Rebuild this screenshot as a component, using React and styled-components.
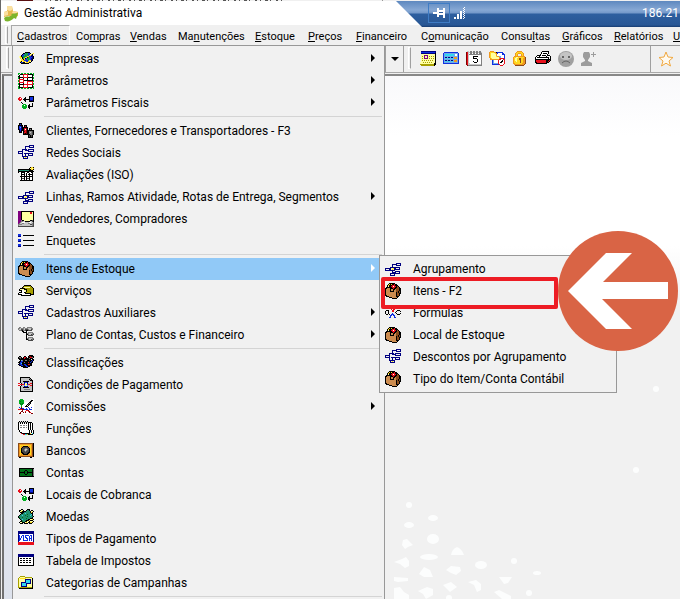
import React from "react";
import styled, { createGlobalStyle } from "styled-components";

const GlobalStyle = createGlobalStyle`
  * {
    box-sizing: border-box;
  }
  body {
    margin: 0;
    background: #f1f1f1;
    overflow: hidden;
  }
  button {
    border: 0;
    padding: 0;
    background: transparent;
    font: inherit;
    color: inherit;
    text-align: left;
  }
`;

const COLORS = {
  k: "#000000",
  n: "#000080",
  b: "#1030e0",
  r: "#e8101c",
  m: "#800000",
  g: "#00b020",
  G: "#007018",
  y: "#ffffa0",
  Y: "#ffd820",
  v: "#a8a000",
  w: "#ffffff",
  s: "#c4c4c4",
  d: "#808080",
  D: "#484848",
  c: "#30d8f0",
  t: "#209070",
  l: "#70a8e8",
  o: "#cc8c50",
  e: "#8a4c1c",
  O: "#f09820",
  p: "#800080",
};

const ICONS = {
  globe: [
    "................",
    ".......kkkkk....",
    ".....kktgtbbk.yY",
    "....kbtttgbbyYk.",
    "...kbbtgttbYYnk.",
    ".yYkbgggtYYbbnnk",
    ".yYYkgtYYkgtbbnk",
    "..YyktYkbggtbnnk",
    "...YYkYbbtgtbnk.",
    "..yYYYbbbbtYYnk.",
    ".yYkyYYYbbYYyk..",
    "..kbbkkyYYYkk...",
    "...kkkkkkkk.....",
  ],
  grid: [
    "gg.gg.gg.gg.gg.g",
    "g.kkkrrrrrkkkkkg",
    ".kwwwrwwwrwwwwkg",
    "kkwwwrwwwrwwwwk.",
    "gkkkkrrrrrkkkkkg",
    "gkwwwkwwwkwwwwkg",
    ".rrrrrwwwkwwwwk.",
    "grwwwrkkkkkkkkkg",
    "grwwwrwwwrrrrrrg",
    ".rrrrrwwwrwwwwr.",
    "gkwwwkwwwrwwwwrg",
    "gkkkkkrrrrrrrrrg",
    ".kwwwrwwwrwwwwk.",
    "gkwwwrwwwrwwwwkg",
    "gkkkkrrrrrkkkkkg",
    "gg.gg.gg.gg.gg.g",
  ],
  flow: [
    "................",
    "...........kkkkk",
    ".rr....k...kbbbk",
    "rrwr..kk...kbbbk",
    "rrrr.kkkkkkkbbbk",
    ".rr...kk...knnnk",
    ".......k...kkkkk",
    "...k............",
    "....k.........k.",
    ".....ggg...k..k.",
    "....ggwgg.kk..k.",
    "....ggggg.kkkkk.",
    "....ggggg.kk....",
    ".....ggg...k....",
  ],
  people: [
    ".kkk............",
    ".kbk............",
    "kkkkk.kkk.......",
    "kbbnk.krk.......",
    "kblnkkkkkk......",
    "kbbnkkrrmk.kkk..",
    "knbnkkrwmk.kdk..",
    ".kbkkkrrmkkkkkkk",
    ".knk.kmrmkkdddDk",
    ".kkk.krrmkkdsdDk",
    ".....kmkmkkdddDk",
    ".....kkkkkkkddDk",
    "..........kDkDk.",
    "..........kDkDk.",
    "..........kkkkk.",
  ],
  network: [
    "...........nnnnn",
    ".......nnnnn...n",
    ".......n...nnnnn",
    ".......n........",
    "....nnnnn.nnnnnn",
    "....n..nnnn....n",
    "nnnnn.....nnnnnn",
    "n...n...........",
    "nnnnn.nnnnnnnnn.",
    "....n..n..n...n.",
    "....n..n..nnnnn.",
    "....nnnnnn......",
    ".....nyYyn......",
    ".....nnnnn......",
  ],
  branch: [
    "................",
    "................",
    "...........nnnnn",
    ".......nnnnn...n",
    ".......n...nnnnn",
    ".......n........",
    ".....nnnnnnnnnn.",
    "nnnnnnyyYnn...n.",
    "n...nnyYynnnnnn.",
    "nnnnnnnnnn......",
    ".......n..nnnnn.",
    ".......nnnn...n.",
    ".....nnnnnnnnnn.",
    ".....n...n......",
    ".....nnnnn......",
  ],
  review: [
    "............kYYk",
    "...........kyYyY",
    "kkkkkkkkkkkkkYYk",
    "kttttttttttkkkk.",
    "kkkkkkkkkkkkkkkk",
    "k.wkkkkwwkkwwkk.",
    "..wkwwkwkwwkwwk.",
    "..wkkkkwkwkkkkk.",
    "..wkwwkwkwwkwwk.",
    "..kkkkkkkkkkkkk.",
    "..wkwwkwkwwkwwk.",
    "..wkDDkwkDDkwwk.",
    "..wkwwkwkwwkwwk.",
    "..kkkkkkkkkkkkk.",
  ],
  vendor: [
    "pppkkkkkkkkkkkkk",
    "pppkyyyyyyyyrryk",
    "pppkyyyyyyyyrryk",
    "pppkyyyyyyyyyyyk",
    "pppkyyyyyyyyyyyk",
    "pppkyyyyyyyyyyyk",
    "pppkyyyyyyyyyyyk",
    "pppkyyyyyyyyyyyk",
    "pppkyyyyyyyyyyyk",
    "pppdkkyyyyyykkDk",
    "pppddsskkkkkssDk",
    "ppdswwwsssswwssD",
    "pdssddssssddssdD",
    "ddddssssssssDDdD",
    "dsssssssssssssdD",
    "DDDDDDDDDDDDDDDD",
  ],
  list: [
    "................",
    "bbb.............",
    "bbb..kkkkkkkkkkk",
    "nnn.............",
    "................",
    "................",
    "bbb.............",
    "bbb..kkkkkkkkkkk",
    "nnn.............",
    "................",
    "................",
    "bbb.............",
    "bbb..kkkkkkkkkkk",
    "nnn.............",
  ],
  box: [
    "....kkkkkk......",
    "...kYkYkkrkk....",
    "..kYkkkrrrkkk...",
    "..kykkrrwrrkek..",
    ".kkkkkkrrrkkeek.",
    "kkoookkkrkkeeekk",
    "kooookookkoeeekk",
    "kooookookooeeekk",
    "kooookkkkooeekek",
    "kooooooooookekek",
    "kooooooooookeekk",
    "kooooooooookeek.",
    "kkoooooooookeek.",
    ".kkkoooooookkk..",
    "....kkkoooook...",
    ".......kkkkk....",
  ],
  service: [
    "................",
    "................",
    "......kkkkkkk...",
    ".....kvvvvvvvk..",
    "....kvyyyyyyvvk.",
    "..kkkkkvvvvvvvvk",
    ".kyyyykkkvvvvvvk",
    ".kkkwwyykvvvvvvk",
    "...kwwwykvvvvvvk",
    ".kkkwwkkvvvvvvvk",
    "kwwwwwwkkkkkkvvk",
    "kkkkwwwwwwwwkkkk",
    "...kkkkkkkkkk...",
  ],
  plan: [
    ".dd..dd..ddddd..",
    "ddsdddsdddsssdd.",
    "dssDDdsDDDdssDd.",
    ".ddDkddDkkDDDD..",
    "....kk..k.......",
    ".....kkkk.ddddd.",
    "........kddsssdd",
    "........kkdssDdD",
    "........k.DDDDD.",
    "........k.......",
    "........k.ddddd.",
    "........kddsssdd",
    "........kkdssDdD",
    "..........DDDDD.",
  ],
  classes: [
    "...........kkkk.",
    ".kk...kk..kmmkkk",
    "kddk.krrk.kkrrdk",
    "kkDkkkrkkkkdkkk.",
    ".kkkkkkkkkkkk.kk",
    "..kldkkddkkDkkbk",
    ".kkbbkkkkkkkkbk.",
    "kkbbkkdkkkrkbkk.",
    ".kbckkkkkkkkkk..",
    "knbbkkbbkkrrkk..",
    ".kkbbkkbbkkkkk..",
    "...kkkkkbbkk....",
    ".....kkkkk......",
  ],
  payment: [
    "..kkkkkkkkkk....",
    "..kssssssssdk...",
    "..ksssssssskdk..",
    "..kssssssssskkk.",
    "..ksskkkkkksssk.",
    "..ksssnbbnssssk.",
    "rr.kssnyynssrrk.",
    "..rrrrbyYbrrssk.",
    "rr.ksslyylssrrk.",
    "..ksssnbbnssssk.",
    "..ksskkkkkksssk.",
    "..ksssssssssssk.",
    "..ksssddddddssk.",
    "..ksssssssssssk.",
    "..kkkkkkkkkkkkk.",
  ],
  commission: [
    "..ggg.........ww",
    ".ggggg.......kkw",
    ".gGggg......kkww",
    ".ggggg.wwwwkkwww",
    ".gGgGgwwwwkdkwww",
    "..gGgwwwwkdkwwww",
    "...gwwwwkykwwwww",
    "...gwwwkkkwwwwww",
    ".b.mwwwwwwbwwbww",
    "..bmbbwwbwwbwwww",
    "rrrrmmbbbbwbbbww",
    "..wwmwwwrrmwwwww",
    "wwwmmwwrwwrmwwww",
    "wwmwwmwmwwwmrwww",
    "wmmwwwwwwwwwwmmw",
  ],
  notepad: [
    ".k.k.k.k.k......",
    "kskskskskskkkk..",
    "kwkwkwkwkwkwkwk.",
    "kwwwwwwwwwkwkwk.",
    "kwddwddwdwkwkwk.",
    "kwwwwwwwwwkwkwk.",
    "kwddwddwdwkwkwk.",
    "kwwwwwwwwwkwkwk.",
    "kwwwwwwwwwkwkwk.",
    ".kwwwwwwwwwkwkwk",
    ".kwwwwwwwwwkwkwk",
    "..kkwwwwwwwkwkwk",
    "...rkkkkkkkkYwck",
    ".....rrccYkkkkk.",
  ],
  safe: [
    "eeeeeeeeeeeeeeek",
    "eOOOOOOOOOOOOOek",
    "eOYYYYYYYYYYYOek",
    "eOYOOkkkkkOOYOek",
    "eOYOkDDDDDkOYOek",
    "eOYkDDDddDDkYOek",
    "eOYkDDdssdDkYOek",
    "eOYkDDdsdDDkYOek",
    "eOYkDDDdDDDkYOek",
    "eOYkkDDDDDkkYOek",
    "eOYOkkDDDkkOYOek",
    "eOYOOkkkkkOOYOek",
    "eOOOOOOOOOOOOOek",
    "eeeeeeeeeeeeeeek",
    ".kk.........kk..",
  ],
  cash: [
    "................",
    "................",
    "................",
    ".kkkkkkkkkkkkkkk",
    ".kGGGGGGGGGGGGkd",
    ".kGGGGGkkGGGGGkd",
    ".kGGGGkGGkGGGGkd",
    ".kkkkkkGGkkkkkkd",
    ".kGGGGkGGkGGGGkd",
    ".kGGGGGkkGGGGGkd",
    ".kGGGGGGGGGGGGkd",
    ".kkkkkkkkkkkkkkk",
  ],
  coins: [
    "...kk....kkk....",
    ".kkyyk..kttk.kk.",
    ".kyYkkkkttttkyyk",
    "..kkkkttttttkYk.",
    "...kkttctttttkk.",
    "..kttttttGtttck.",
    ".kttcttGttttctk.",
    "kttttttttGtttttk",
    "kGttGtttttttttk.",
    ".kttttttGtttkkk.",
    "..ktctttttkkyyYk",
    "...kttttkkkYkkk.",
    "..kkGttkkyykyyyk",
    ".kyykkkyYykkYYk.",
    "..kkk.kkkk.kkk..",
  ],
  visa: [
    "nnnnnnnnnnnnnnnn",
    "nnnnnnnnnnnnnnnn",
    "nnnnnnnnnnnnnnnn",
    "nwwwwwwwwwwwwwwn",
    "nbwwbbwbbbbwbbwn",
    "nbwbwbwbwwwbwbwn",
    "nbwbwbwbbwwbwbwn",
    "nbbwwbwwbbwbbbwn",
    "nbbwwbwwwbwbwbwn",
    "nbwwwbbbbbwbwbwn",
    "nwwwwwwwwwwwwwwn",
    "rrrrrrrrrrrrrrrr",
    "rrrrrrrrrrrrrrrr",
    "rrrrrrrrrrrrrrrr",
  ],
  table: [
    "................",
    "nnnnnnnnnnnnnnnn",
    "nnnnnnnnnnnnnnnn",
    "nnnnnnnnnnnnnnnn",
    "kwwwwwwwwwwwwwwk",
    "kwkkwkkwkkwkkwwk",
    "kwwwwwwwwwwwwwwk",
    "kwkkwkkwkkwkkwwk",
    "kwwwwwwwwwwwwwwk",
    "kwkkwkkwkkwkkwwk",
    "kwwwwwwwwwwwwwwk",
    "kwwwwwwwwwwwwwwk",
    "kkkkkkkkkkkkkkkk",
  ],
  folder: [
    "................",
    "..vvvvv.........",
    ".vyyyyyvvvvvvv..",
    "vyYYYYYYyyyyyyk.",
    "vyyyyyynnnnnnyk.",
    "vyyyyyynccccnyk.",
    "vyyyyyynccccnyk.",
    "vyynnnnnccccnyk.",
    "vyynccccnnnnnyk.",
    "vyynccccnyyyyyk.",
    "vyynccccnyyyyyk.",
    "vyynnnnnnyyyyyk.",
    "vvvvvvvvvvvvvvk.",
    ".kkkkkkkkkkkkkk.",
  ],
  formula: [
    "................",
    "....rr....rr....",
    ".....rr..rr.....",
    "......r..r......",
    "......r.rr......",
    ".kkk...rr...kkk.",
    "k..k...rr..k...k",
    "k..k......k.....",
    "k..k...b...k...k",
    ".kk.k.bbb...kkk.",
    ".....bb.bb......",
    ".....b...b......",
    "....bb...bb.....",
    "................",
  ],
  calendar: [
    ".nnnnnnnnnnnnnnn",
    ".bbbbbbbbbbbbbbn",
    ".nnnnnnnnnnnnnnk",
    ".yyyyyyyyyyyyyyk",
    ".yyyppppyyyyyyyk",
    ".yvypyypyvyvyvyk",
    ".yyypyypyyyyyyyk",
    ".yvyppppyvyvyvyk",
    ".yyyyyyyyyyyyyyk",
    ".yvyvyvyvyvyvyyk",
    ".yyyyyyyyyyyyyyk",
    "yyyvyvyvyvyvyyyk",
    "yyyyyyyyyyyyyykk",
    "vvvvvvvvvvvvvvkk",
    ".vvvvvvvvvvvvvk.",
  ],
  calc: [
    "................",
    ".bbbbbbbbbbbbbb.",
    "bllllllllllllllb",
    "blccccccccclwwlb",
    "blccccccccclwwlb",
    "bllllllllllllllb",
    "blnnlnnlnnlOOOlb",
    "blcclcclcclOOOlb",
    "bllllllllllllllb",
    "blnnlnnlnnlOOOlb",
    "blcclcclcclOOOlb",
    "bllllllllllllllb",
    "bbbbbbbbbbbbbbbb",
  ],
  agenda: [
    ".ss.dd.dd.dd.dd.",
    "mrssddsddsddsdds",
    "mrswddwddwddwddd",
    "mrsddddddddddddd",
    "mrswwwwwwwwwwwwd",
    "mrswwwwkkkkkwwwd",
    "mrswwwwkwwwwwwwd",
    "mrswwwwkkkkwwwwd",
    "mrswwwwwwwwkwwwd",
    "mrswwwwwwwwkwwwd",
    "mrswwwwkwwwkwwwd",
    "mrswwwwwkkkwwwwd",
    "mrsswwwwwwwwwwwd",
    "mrsssssssssssssd",
    ".mdddddddddddddd",
  ],
  files: [
    ".OOOO...........",
    "OYYYYOOkbbbbbb..",
    "OYyyyyYObwwwwbb.",
    "OYyyyyyOwwwwwbbb",
    "OYyyyyyOwwwwwwwb",
    "OYyyyyyYOOllwwwb",
    "OYyyyyyyyyOlwwwb",
    ".OYyyyyyyyOrrrrb",
    ".OOOOOOOOOrrwwrr",
    "...blwwwwrwwwkwr",
    "...blwwwwrwwkkwr",
    "...blwwwwrwkkwwr",
    "...blllllrwwwwwr",
    "...bbbbbbbrwwwr.",
    "...........rrr..",
  ],
  lock: [
    ".....OOOOO......",
    "....OYYYYYO.....",
    "...OYYOOOYYO....",
    "...OYO...OYO....",
    "...OYO...OYO....",
    "..OOOOOOOOOOO...",
    ".OYYyyYYYYYYOe..",
    ".OYyyYYeeYYOOe..",
    ".OYyyYYeeYYOOe..",
    ".OYyyYYYeYYOOe..",
    ".OYYyYYYeYYOOe..",
    ".OYYYYYYeYYOOe..",
    ".OOYYYYYYYOOOe..",
    "..OOOOOOOOOOe...",
    "...eeeeeeeee....",
  ],
  phone: [
    ".......kkkkkkk..",
    "......kwwwwwwk..",
    "......kwkkkkwk..",
    ".....kwwwwwwk...",
    "..kkkkwkkkkwkkk.",
    ".kwwkwwwwwwkwwwk",
    "kwkkkkkkkkkkkkwk",
    "kwwwwwwwwwwwwkwk",
    "kkkkkkkkkkkkkkkk",
    "krrrrrrrrrrkkkrk",
    "krrrrrrrrrrkkrk.",
    "kkrrrrrrrrrkkk..",
    ".kkkkkkkkkkk....",
  ],
};

const PixelSvg = styled.svg`
  display: block;
  flex: none;
  width: 16px;
  height: 16px;
`;

function PixelIcon({ name }) {
  const cells = [];
  ICONS[name].forEach((row, y) => {
    let x = 0;
    while (x < row.length) {
      const c = row[x];
      let end = x + 1;
      while (end < row.length && row[end] === c) end++;
      if (c !== ".") {
        cells.push(
          <rect key={`${x}-${y}`} x={x} y={y} width={end - x} height="1" fill={COLORS[c]} />
        );
      }
      x = end;
    }
  });
  return (
    <PixelSvg viewBox="0 0 16 16" shapeRendering="crispEdges" aria-hidden="true">
      {cells}
    </PixelSvg>
  );
}

const MENUS = [
  { label: "Cadastros", key: 0, width: 59 },
  { label: "Compras", key: 2, width: 54 },
  { label: "Vendas", key: 0, width: 48 },
  { label: "Manutenções", key: 2, width: 77 },
  { label: "Estoque", key: 0, width: 53 },
  { label: "Preços", key: 0, width: 48 },
  { label: "Financeiro", key: 0, width: 65 },
  { label: "Comunicação", key: 1, width: 80 },
  { label: "Consultas", key: 5, width: 61 },
  { label: "Gráficos", key: 0, width: 52 },
  { label: "Relatórios", key: 0, width: 59 },
  { label: "U", key: 0, width: 20 },
];

const STOCK_ITEMS = [
  { label: "Agrupamento", icon: "branch" },
  { label: "Itens - F2", icon: "box" },
  { label: "Fórmulas", icon: "formula" },
  { label: "Local de Estoque", icon: "box" },
  { label: "Descontos por Agrupamento", icon: "network" },
  { label: "Tipo do Item/Conta Contábil", icon: "box" },
];

const GROUPS = [
  [
    { label: "Empresas", icon: "globe", more: true },
    { label: "Parâmetros", icon: "grid", more: true },
    { label: "Parâmetros Fiscais", icon: "flow", more: true },
  ],
  [
    { label: "Clientes, Fornecedores e Transportadores - F3", icon: "people" },
    { label: "Redes Sociais", icon: "network" },
    { label: "Avaliações (ISO)", icon: "review" },
    { label: "Linhas, Ramos Atividade, Rotas de Entrega, Segmentos", icon: "branch", more: true },
    { label: "Vendedores, Compradores", icon: "vendor" },
    { label: "Enquetes", icon: "list" },
  ],
  [
    { label: "Itens de Estoque", icon: "box", more: true, items: STOCK_ITEMS },
    { label: "Serviços", icon: "service" },
    { label: "Cadastros Auxiliares", icon: "network", more: true },
    { label: "Plano de Contas, Custos e Financeiro", icon: "plan", more: true },
  ],
  [
    { label: "Classificações", icon: "classes" },
    { label: "Condições de Pagamento", icon: "payment" },
    { label: "Comissões", icon: "commission", more: true },
    { label: "Funções", icon: "notepad" },
    { label: "Bancos", icon: "safe" },
    { label: "Contas", icon: "cash" },
    { label: "Locais de Cobranca", icon: "flow" },
    { label: "Moedas", icon: "coins" },
    { label: "Tipos de Pagamento", icon: "visa" },
    { label: "Tabela de Impostos", icon: "table" },
    { label: "Categorias de Campanhas", icon: "folder" },
  ],
];

const Window = styled.div`
  position: relative;
  display: flex;
  flex-direction: column;
  height: 100vh;
  overflow: hidden;
  background: #f0f0f0;
  color: #000;
  font-family: Roboto, "Open Sans", sans-serif;
  font-size: 12px;
  border-left: 1px solid #686868;
`;

/* sliver of the window that lies behind this one */
const BackWindow = styled.svg`
  display: block;
  flex: none;
  width: 100%;
  height: 1px;
`;

const TitleBar = styled.header`
  display: flex;
  align-items: center;
  gap: 5px;
  flex: none;
  height: 24px;
  padding-left: 2px;
  background: #fff;
  h1 {
    margin: 0;
    font-size: 12px;
    font-weight: 400;
    line-height: 16px;
  }
`;

const Logo = styled.svg`
  width: 16px;
  height: 17px;
  flex: none;
`;

const RemoteBar = styled.div`
  position: absolute;
  top: 1px;
  right: 0;
  left: 395px;
  display: flex;
  align-items: center;
  height: 26px;
  padding: 0 1px 2px 32px;
  gap: 4px;
  color: #fff;
  background: linear-gradient(
    #5e88bf 0,
    #86a8d4 9px,
    #7398c9 12px,
    #2e5f9f 13px,
    #285795 24px,
    #173c70 26px
  );
  clip-path: polygon(0 0, 100% 0, 100% 100%, 26px 100%);
  span {
    margin-left: auto;
  }
`;

const PinButton = styled.button`
  display: grid;
  place-items: center;
  width: 22px;
  height: 20px;
  border: 1px solid #3f7cc4;
`;

const MenuBar = styled.nav`
  position: relative;
  display: flex;
  align-items: stretch;
  flex: none;
  height: 21px;
  padding-left: 1px;
  border-bottom: 1px solid #989898;
  font-size: 11px;
`;

const Grip = styled.span`
  flex: none;
  width: 3px;
  margin: 1px 3px;
  border: 1px solid #fff;
  border-right-color: #a0a0a0;
`;

const BarItem = styled.button`
  flex: none;
  width: ${(props) => props.$width}px;
  padding: 2px 0 0 5px;
  line-height: 18px;
  white-space: nowrap;
  border: 1px solid ${(props) => (props.$open ? "#a8a8a8" : "transparent")};
  border-bottom: 0;
  border-right-color: ${(props) => (props.$open ? "#fff" : "transparent")};
`;

const ToolBar = styled.div`
  display: flex;
  flex: none;
  height: 27px;
  padding-left: 1px;
  border-bottom: 1px solid #a8a8a8;
`;

const Band = styled.div`
  display: flex;
  align-items: center;
  gap: 7px;
  flex: ${(props) => (props.$wide ? "1 1 0" : "none")};
  width: ${(props) => props.$width || "auto"};
  border-right: 1px solid #a0a0a0;
  ${Grip} {
    align-self: stretch;
    margin: 1px 2px 3px 4px;
  }
`;

const ToolButton = styled.button`
  flex: none;
  width: 16px;
  height: 16px;
  svg {
    display: block;
  }
`;

const DropButton = styled.button`
  display: grid;
  place-items: center;
  align-self: stretch;
  width: 18px;
  margin-left: auto;
  border-left: 1px solid #a0a0a0;
`;

const Favourite = styled.button`
  display: grid;
  place-items: center;
  flex: none;
  width: 29px;
`;

const Workspace = styled.main`
  position: relative;
  flex: 1;
  min-height: 0;
  margin: 1px 0 0 1px;
  border: solid #707070;
  border-width: 2px 0 0 2px;
  border-top-color: #888;
  background: linear-gradient(#f9f9fb 0, #fff 60px, #fff 170px, #f1f1f1 230px);
`;

const LeftEdge = styled.div`
  width: 8px;
  height: 100%;
  background: linear-gradient(#eceef2, #dfe3ea 30%, #e8ebf2 60%, #dde2ec);
`;

const Splatter = styled.svg`
  position: absolute;
  left: 380px;
  bottom: 0;
  width: 290px;
  height: 220px;
`;

const Menu = styled.ul`
  position: absolute;
  z-index: 2;
  margin: 0;
  padding: 2px;
  list-style: none;
  background: #f1f1f1;
  border: 1px solid #989898;
  font-size: 12px;
`;

const MainMenu = styled(Menu)`
  top: 20px;
  left: 11px;
  width: 373px;
`;

const SubMenu = styled(Menu)`
  top: -3px;
  left: 364px;
  width: 238px;
`;

const Entry = styled.li`
  position: relative;
`;

const EntryButton = styled.button`
  display: flex;
  align-items: center;
  width: 100%;
  height: 22px;
  padding: 0 7px 0 3px;
  background: ${(props) => (props.$active ? "#91c9f7" : "transparent")};
  > span {
    flex: 1;
    margin-left: 12px;
    line-height: 20px;
    white-space: nowrap;
  }
`;

const Arrow = styled.i`
  width: 0;
  height: 0;
  margin-bottom: 2px;
  border: 4px solid transparent;
  border-right: 0;
  border-left-color: ${(props) => (props.$active ? "#fff" : "#000")};
`;

const Separator = styled.li`
  height: 6px;
  padding: 2px 0 0 29px;
  &::before {
    content: "";
    display: block;
    height: 1px;
    background: #d4d4d4;
  }
`;

const Highlight = styled.li`
  position: absolute;
  top: 21px;
  left: 1px;
  width: 177px;
  height: 32px;
  border: 4px solid #ed1c24;
  border-radius: 2px;
  pointer-events: none;
`;

const Callout = styled.svg`
  position: absolute;
  top: -25px;
  left: 178px;
  width: 120px;
  height: 120px;
  pointer-events: none;
`;

function MenuEntry({ item }) {
  return (
    <Entry role="none">
      <EntryButton type="button" role="menuitem" $active={!!item.items}>
        <PixelIcon name={item.icon} />
        <span>{item.label}</span>
        {item.more && <Arrow $active={!!item.items} />}
      </EntryButton>
      {item.items && (
        <SubMenu role="menu">
          {item.items.map((sub) => (
            <MenuEntry key={sub.label} item={sub} />
          ))}
          <Highlight role="none" />
          <li role="none">
            <Callout viewBox="0 0 120 120" aria-hidden="true">
              <circle cx="60" cy="60" r="60" fill="#d96445" />
              <path d="M10 60 48 22H74L45 51H110V68H44L74 98H48Z" fill="#fff" />
            </Callout>
          </li>
        </SubMenu>
      )}
    </Entry>
  );
}

function App() {
  return (
    <>
      <GlobalStyle />
      <Window>
        <BackWindow aria-hidden="true">
          <path d="M16 0h16v1H16z" fill="#5a1010" />
          <path d="M44 .5h238" stroke="#555" strokeDasharray="2 3 1 4 3 2 1 5" />
          <path d="M381 0h1v1h-1z" fill="#989898" />
        </BackWindow>
        <TitleBar>
          <Logo viewBox="0 0 16 17" aria-hidden="true">
            <path d="M4 1h5l1 5 5 1v4l-5 2-4-2-5 1V7l3-1z" fill="#e8b850" />
            <path d="M4 1h5v4l-2 1-3-1zM1 7l4-1v4l-4 1zM10 6l5 1-3 2-3-1z" fill="#fae0a0" />
            <path d="M1 13c3-3 5 0 8-3l-1-1 7-1-2 6-2-1c-3 3-6 4-9 3z" fill="#7cb52c" />
          </Logo>
          <h1>Gestão Administrativa</h1>
        </TitleBar>

        <MenuBar>
          <Grip />
          {MENUS.map((menu, i) => (
            <BarItem key={menu.label} type="button" $width={menu.width} $open={i === 0}>
              {menu.label.slice(0, menu.key)}
              <u>{menu.label[menu.key]}</u>
              {menu.label.slice(menu.key + 1)}
            </BarItem>
          ))}
          <MainMenu role="menu">
            {GROUPS.map((group, i) => (
              <React.Fragment key={i}>
                {group.map((item) => (
                  <MenuEntry key={item.label} item={item} />
                ))}
                <Separator role="separator" />
              </React.Fragment>
            ))}
          </MainMenu>
        </MenuBar>

        <ToolBar>
          <Band $width="402px">
            <Grip />
            <DropButton type="button" aria-label="Mais opções">
              <svg width="8" height="4" viewBox="0 0 8 4">
                <path d="M0 0h8L4 4z" />
              </svg>
            </DropButton>
          </Band>
          <Band $wide>
            <Grip />
            {["calendar", "calc", "agenda", "files", "lock", "phone"].map((name) => (
              <ToolButton key={name} type="button" aria-label={name}>
                <PixelIcon name={name} />
              </ToolButton>
            ))}
            <ToolButton type="button" aria-label="sad">
              <svg width="16" height="16" viewBox="0 0 16 16">
                <circle cx="8" cy="8" r="8" fill="#a0a0a0" />
                <ellipse cx="8" cy="5" rx="6" ry="4" fill="#c4c4c4" />
                <path d="M4 5h2v2H4zM10 5h2v2h-2z" fill="#666" />
                <path d="M4 12q4-4 8 0" fill="none" stroke="#666" />
              </svg>
            </ToolButton>
            <ToolButton type="button" aria-label="user">
              <svg width="16" height="16" viewBox="0 0 16 16" fill="#9c9c9c">
                <path d="M3 1h5l1 2v3L7 9v1l4 2v3H0v-3l4-2V9L2 6V3z" />
                <path d="M12 1h1v2h2v1h-2v2h-1V4h-2V3h2z" />
              </svg>
            </ToolButton>
          </Band>
          <Favourite type="button" aria-label="Favoritos">
            <svg width="16" height="16" viewBox="0 0 16 16">
              <path
                d="M8 1l2 5 5 .5-4 3.500 1.500 5L8 12.200 3.500 15 5 10 1 6.500 6 6z"
                fill="#fffaf0"
                stroke="#f0a840"
                strokeLinejoin="round"
              />
            </svg>
          </Favourite>
        </ToolBar>

        <Workspace>
          <LeftEdge />
          <Splatter viewBox="384 379 290 220" fill="#fcfdfd" aria-hidden="true">
            <circle cx="656" cy="389" r="3" />
            <circle cx="636" cy="470" r="3" />
            <circle cx="409" cy="505" r="3" />
            <ellipse cx="433" cy="518" rx="5" ry="3" />
            <ellipse cx="409" cy="525" rx="5" ry="3" />
            <ellipse cx="433" cy="539" rx="6" ry="5" />
            <path d="M403 540l4-1 6 6-5 2-3 2-3-4z" />
            <path d="M451 555q1-6 6-8 5 2 7 8z" />
            <ellipse cx="429" cy="557" rx="9" ry="3" />
            <path d="M394 562l8-3 4-2 3 4v5l-4 2-5-4z" />
            <path d="M419 574l5-7 6 3 3 7h-9z" />
            <path d="M446 570l5-4 9 1 1 4-5 4-5-2z" />
            <ellipse cx="481" cy="565" rx="6" ry="4" />
            <circle cx="514" cy="561" r="3" />
            <ellipse cx="537" cy="573" rx="4" ry="2" />
            <path d="M499 577h13l-4 6-4 1z" />
            <path d="M394 577l14 1v3l-10 1-4-1z" />
            <path d="M443 585l8-3 6 5-7 5z" />
            <path d="M468 582l8-2 5 4v6l-4 2-3-7z" />
            <path d="M394 588l6-1 4 5 5 3v4h-15z" />
            <path d="M418 591l9-4 6 2v6l-7 4-3-5z" />
            <path d="M494 592l5-2 12 6v3h-9z" />
            <circle cx="529" cy="593" r="3" />
            <circle cx="449" cy="598" r="3" />
          </Splatter>
        </Workspace>

        <RemoteBar>
          <PinButton type="button" aria-label="Fixar">
            <svg width="13" height="10" viewBox="0 0 13 10" fill="#fff">
              <path d="M0 4h4V0h2v2h4V0h2v10h-2V7H6v2H4V6H0z" />
              <path d="M6 4h4v1H6z" fill="#285795" />
            </svg>
          </PinButton>
          <svg width="12" height="12" viewBox="0 0 12 12" fill="#fff">
            <path d="M0 10h2v2H0zM3 7h2v5H3zM6 4h2v8H6zM9 1h1v1H9zM9 3h1v1H9zM9 5h1v1H9zM9 7h1v1H9zM9 9h1v1H9zM9 11h1v1H9zM10 0h1v1h-1zM10 2h1v1h-1zM10 4h1v1h-1zM10 6h1v1h-1zM10 8h1v1h-1zM10 10h1v1h-1z" />
          </svg>
          <span>186.21</span>
        </RemoteBar>
      </Window>
    </>
  );
}

export default App;
